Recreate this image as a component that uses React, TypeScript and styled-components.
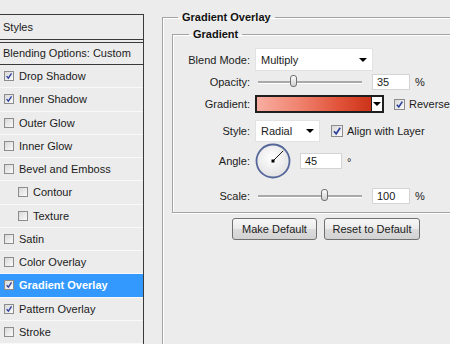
import React from 'react';
import styled, { createGlobalStyle } from 'styled-components';

const GlobalStyle = createGlobalStyle`
    html, body {
        margin: 0;
        padding: 0;
        background: #ececec;
        overflow: hidden;
    }
    body {
        font-family: 'Liberation Sans', Arial, sans-serif;
        font-size: 11px;
        color: #1b1b1b;
    }
`;

const styleItems = [
    { label: 'Drop Shadow', checked: true },
    { label: 'Inner Shadow', checked: true },
    { label: 'Outer Glow', checked: false },
    { label: 'Inner Glow', checked: false },
    { label: 'Bevel and Emboss', checked: false },
    { label: 'Contour', checked: false, indent: true },
    { label: 'Texture', checked: false, indent: true },
    { label: 'Satin', checked: false },
    { label: 'Color Overlay', checked: false },
    { label: 'Gradient Overlay', checked: true, selected: true },
    { label: 'Pattern Overlay', checked: true },
    { label: 'Stroke', checked: false },
];

const CheckBox: React.FC<{ checked?: boolean; size?: number }> = ({ checked, size = 10 }) => (
    <Box $size={size}>
        {checked && (
            <svg width={size - 2} height={size - 2} viewBox="0 0 10 10">
                <path d="M2 5.2 L4.2 7.8 L8.2 1.8" fill="none" stroke="#2c3f9c" strokeWidth="1.7" />
            </svg>
        )}
    </Box>
);

const Slider: React.FC<{ value: number; min: number; max: number }> = ({ value, min, max }) => {
    const pct = ((value - min) / (max - min)) * 100;
    return (
        <Track>
            <Thumb style={{ left: `${pct}%` }} />
        </Track>
    );
};

const AngleDial: React.FC<{ angle: number }> = ({ angle }) => {
    const r = (angle * Math.PI) / 180;
    const x = 18 + 14.5 * Math.cos(r);
    const y = 18 - 14.5 * Math.sin(r);
    return (
        <svg width="36" height="36" viewBox="0 0 36 36">
            <defs>
                <radialGradient id="dialFill" cx="45%" cy="40%" r="60%">
                    <stop offset="0%" stopColor="#ffffff" />
                    <stop offset="100%" stopColor="#e2e2e2" />
                </radialGradient>
            </defs>
            <circle cx="18" cy="18" r="16.5" fill="url(#dialFill)" stroke="#56679a" strokeWidth="1.8" />
            <line x1="18" y1="18" x2={x} y2={y} stroke="#1a1a1a" strokeWidth="1" />
            <rect x="16.5" y="16.5" width="3" height="3" fill="#000" />
        </svg>
    );
};

const App: React.FC = () => {
    return (
        <Page>
            <GlobalStyle />
            <StylesPanel>
                <StylesHeader>Styles</StylesHeader>
                <BlendingRow>Blending Options: Custom</BlendingRow>
                {styleItems.map((item) => (
                    <StyleRow key={item.label} $indent={!!item.indent} $selected={!!item.selected}>
                        <CheckBox checked={item.checked} />
                        <span>{item.label}</span>
                    </StyleRow>
                ))}
            </StylesPanel>

            <SettingsPanel>
                <Group>
                    <GroupTitle $offset={6}>Gradient Overlay</GroupTitle>
                    <InnerGroup>
                        <GroupTitle $offset={16}>Gradient</GroupTitle>

                        <Row $h={23} $mt={0}>
                            <Label>Blend Mode:</Label>
                            <Select $w={118}>
                                <span>Multiply</span>
                                <Arrow />
                            </Select>
                        </Row>

                        <Row $h={18} $mt={2}>
                            <Label>Opacity:</Label>
                            <Slider value={35} min={0} max={100} />
                            <NumberBox $w={38}>35</NumberBox>
                            <Unit>%</Unit>
                        </Row>

                        <Row $h={18} $mt={4}>
                            <Label>Gradient:</Label>
                            <Swatch>
                                <SwatchFill />
                                <SwatchArrow>
                                    <Arrow />
                                </SwatchArrow>
                            </Swatch>
                            <CheckLabel $ml={10}>
                                <CheckBox checked size={11} />
                                Reverse
                            </CheckLabel>
                        </Row>

                        <Row $h={22} $mt={7}>
                            <Label>Style:</Label>
                            <Select $w={65}>
                                <span>Radial</span>
                                <Arrow />
                            </Select>
                            <CheckLabel $ml={11}>
                                <CheckBox checked size={12} />
                                Align with Layer
                            </CheckLabel>
                        </Row>

                        <Row $h={36} $mt={1}>
                            <Label>Angle:</Label>
                            <AngleDial angle={45} />
                            <NumberBox $w={42} $ml={9}>45</NumberBox>
                            <Degree>°</Degree>
                        </Row>

                        <Row $h={18} $mt={8}>
                            <Label>Scale:</Label>
                            <Slider value={100} min={10} max={150} />
                            <NumberBox $w={38}>100</NumberBox>
                            <Unit>%</Unit>
                        </Row>
                    </InnerGroup>

                    <ButtonBar>
                        <Button $w={85}>Make Default</Button>
                        <Button $w={96}>Reset to Default</Button>
                    </ButtonBar>
                </Group>
            </SettingsPanel>
        </Page>
    );
};
export default App;

const Page = styled.div`
    display: flex;
    width: 450px;
    height: 344px;
    overflow: hidden;
`;

const StylesPanel = styled.div`
    flex: 0 0 144px;
    box-sizing: border-box;
    margin-top: 14px;
    border-top: 1px solid #3a3a3a;
    border-right: 1px solid #3a3a3a;
    height: 340px;
`;

const StylesHeader = styled.div`
    height: 24px;
    line-height: 24px;
    padding-left: 3px;
    border-bottom: 1px solid #3a3a3a;
`;

const BlendingRow = styled.div`
    margin-top: 2px;
    border-top: 1px solid #3a3a3a;
    border-bottom: 1px solid #3a3a3a;
    height: 21px;
    line-height: 21px;
    padding-left: 3px;
`;

const StyleRow = styled.div<{ $indent: boolean; $selected: boolean }>`
    display: flex;
    align-items: center;
    gap: 5px;
    height: 22.25px;
    border-bottom: 1px solid #f9f9f9;
    padding-left: ${(p) => (p.$indent ? 18 : 4)}px;
    background: ${(p) => (p.$selected ? '#3399ff' : 'transparent')};
    color: ${(p) => (p.$selected ? '#ffffff' : '#1b1b1b')};
    font-weight: ${(p) => (p.$selected ? 'bold' : 'normal')};
`;

const Box = styled.span<{ $size: number }>`
    display: inline-flex;
    align-items: center;
    justify-content: center;
    box-sizing: border-box;
    width: ${(p) => p.$size}px;
    height: ${(p) => p.$size}px;
    flex: 0 0 auto;
    border: 1px solid #8c8c8c;
    background: linear-gradient(135deg, #d8d8d8, #fbfbfb);
`;

const SettingsPanel = styled.div`
    flex: 1;
    padding-left: 18px;
`;

const Group = styled.fieldset`
    margin: 10px 0 0 0;
    padding: 3px 0 0 9px;
    width: 320px;
    height: 400px;
    box-sizing: border-box;
    border: 1px solid #a4a4a4;
    box-shadow: inset 1px 1px 0 #ffffff;
`;

const InnerGroup = styled.fieldset`
    margin: 0;
    padding: 7px 0 7px 0;
    width: 320px;
    border: 1px solid #a4a4a4;
    box-shadow: inset 1px 1px 0 #ffffff, 1px 1px 0 #ffffff;
`;

const GroupTitle = styled.legend<{ $offset: number }>`
    margin-left: ${(p) => p.$offset}px;
    padding: 0 4px;
    font-weight: bold;
    line-height: 14px;
    color: #111;
`;

const Row = styled.div<{ $h: number; $mt: number }>`
    display: flex;
    align-items: center;
    height: ${(p) => p.$h}px;
    margin-top: ${(p) => p.$mt}px;
`;

const Label = styled.span`
    flex: 0 0 77px;
    text-align: right;
    margin-right: 5px;
`;

const Select = styled.div<{ $w: number }>`
    display: flex;
    align-items: center;
    justify-content: space-between;
    box-sizing: border-box;
    width: ${(p) => p.$w}px;
    height: 100%;
    padding: 0 5px 0 5px;
    background: #ffffff;
    border: 1px solid #e2e2e2;
`;

const Arrow = styled.span`
    width: 0;
    height: 0;
    border-left: 4px solid transparent;
    border-right: 4px solid transparent;
    border-top: 4px solid #000;
`;

const Track = styled.div`
    position: relative;
    width: 104px;
    height: 2px;
    margin: 0 10px 0 3px;
    background: #a9a9a9;
    border-bottom: 1px solid #ffffff;
`;

const Thumb = styled.span`
    position: absolute;
    top: -6px;
    width: 7px;
    height: 12px;
    margin-left: -4px;
    box-sizing: border-box;
    border: 1px solid #707070;
    border-radius: 3px;
    background: linear-gradient(#fdfdfd, #cfcfcf);
`;

const NumberBox = styled.div<{ $w: number; $ml?: number }>`
    box-sizing: border-box;
    width: ${(p) => p.$w}px;
    height: 16px;
    line-height: 14px;
    margin-left: ${(p) => p.$ml ?? 0}px;
    padding-left: 4px;
    background: #ffffff;
    border: 1px solid #d4d4d4;
`;

const Unit = styled.span`
    margin-left: 5px;
`;

const Degree = styled.span`
    margin-left: 5px;
    align-self: flex-start;
    margin-top: 13px;
`;

const Swatch = styled.div`
    display: flex;
    box-sizing: border-box;
    width: 129px;
    height: 18px;
    border: 2px solid #1e1e1e;
`;

const SwatchFill = styled.div`
    flex: 1;
    background: linear-gradient(90deg, #f8aea2 0%, #f08571 35%, #e2553c 70%, #cc3418 100%);
`;

const SwatchArrow = styled.div`
    flex: 0 0 10px;
    display: flex;
    align-items: center;
    justify-content: center;
    background: #ffffff;
    border-left: 1px solid #1e1e1e;
`;

const CheckLabel = styled.label<{ $ml: number }>`
    display: flex;
    align-items: center;
    gap: 4px;
    margin-left: ${(p) => p.$ml}px;
    white-space: nowrap;
`;

const ButtonBar = styled.div`
    display: flex;
    gap: 7px;
    margin-top: 5px;
    padding-left: 60px;
`;

const Button = styled.button<{ $w: number }>`
    width: ${(p) => p.$w}px;
    height: 22px;
    padding: 0;
    font-family: 'Liberation Sans', Arial, sans-serif;
    font-size: 11px;
    color: #1b1b1b;
    border: 1px solid #707070;
    border-radius: 3px;
    background: linear-gradient(#f7f7f7 0%, #ebebeb 50%, #dcdcdc 51%, #d2d2d2 100%);
`;
